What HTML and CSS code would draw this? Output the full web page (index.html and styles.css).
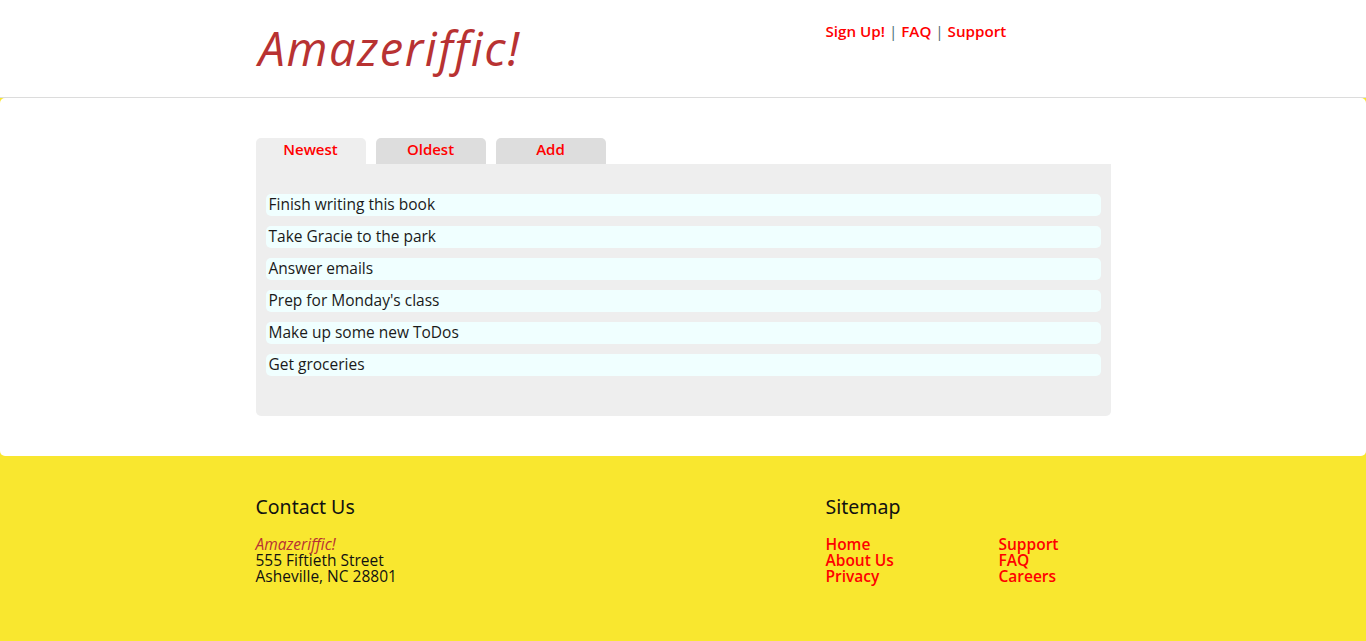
FILE: index.html
```html
<!DOCTYPE html>
<html lang="en">
<head>
<meta charset="utf-8">
<title>Amazeriffic</title>
<link rel="stylesheet" href="styles.css">
</head>
<body>
<header class="site-header">
  <div class="container header-row">
    <div class="brand-col">
      <h1 class="brand">Amazeriffic!</h1>
    </div>
    <nav class="top-nav">
      <a href="#">Sign Up!</a> <span class="sep">|</span>
      <a href="#">FAQ</a> <span class="sep">|</span>
      <a href="#">Support</a>
    </nav>
  </div>
</header>
<main class="site-main">
  <div class="container">
    <div class="tabs">
      <a class="tab active" href="#">Newest</a>
      <a class="tab" href="#">Oldest</a>
      <a class="tab" href="#">Add</a>
    </div>
    <div class="content">
      <ul class="todos">
        <li>Finish writing this book</li>
        <li>Take Gracie to the park</li>
        <li>Answer emails</li>
        <li>Prep for Monday's class</li>
        <li>Make up some new ToDos</li>
        <li>Get groceries</li>
      </ul>
    </div>
  </div>
</main>
<footer class="site-footer">
  <div class="container footer-row">
    <div class="contact">
      <h3 class="footer-title">Contact Us</h3>
      <p class="address"><span class="brand-small">Amazeriffic!</span><br>555 Fiftieth Street<br>Asheville, NC 28801</p>
    </div>
    <div class="sitemap">
      <h3 class="footer-title">Sitemap</h3>
      <div class="sitemap-cols">
        <ul class="links first">
          <li><a href="#">Home</a></li>
          <li><a href="#">About Us</a></li>
          <li><a href="#">Privacy</a></li>
        </ul>
        <ul class="links">
          <li><a href="#">Support</a></li>
          <li><a href="#">FAQ</a></li>
          <li><a href="#">Careers</a></li>
        </ul>
      </div>
    </div>
  </div>
</footer>
</body>
</html>
```
FILE: styles.css
```css
html, body {
  margin: 0;
  padding: 0;
}
body {
  background: #f9e72f;
  font-family: "Open Sans", "DejaVu Sans", sans-serif;
  font-size: 15.5px;
  color: #111;
  min-height: 641px;
}
a {
  color: #ff0000;
  text-decoration: none;
  font-weight: 600;
}
.container {
  width: 855px;
  margin: 0 auto;
}
.site-header {
  background: #fff;
  border-bottom: 1px solid #dcdcdc;
  height: 97px;
}
.header-row {
  display: flex;
}
.brand-col {
  width: 570px;
  flex-shrink: 0;
}
.brand {
  margin: 0;
  padding-top: 20px;
  padding-left: 3px;
  font-family: "Open Sans", sans-serif;
  font-style: italic;
  font-weight: 400;
  font-size: 47px;
  line-height: 56px;
  color: #b83232;
  letter-spacing: 1.6px;
}
.top-nav {
  padding-top: 20px;
  line-height: 22px;
  font-size: 15.2px;
}
.top-nav .sep {
  color: #4a6a70;
  font-weight: 400;
}
.site-main {
  background: #fff;
  border-radius: 5px;
  padding: 40px 0;
}
.tabs {
  display: flex;
  gap: 10px;
}
.tab {
  width: 110px;
  height: 26px;
  line-height: 23px;
  font-size: 15px;
  text-align: center;
  background: #dddddd;
  border-radius: 5px 5px 0 0;
}
.tab.active {
  background: #eeeeee;
}
.content {
  background: #eeeeee;
  border-radius: 0 0 5px 5px;
  padding: 30px 10px 30px;
}
.todos {
  list-style: none;
  margin: 0;
  padding: 0;
  display: flex;
  flex-direction: column;
  gap: 10px;
  padding-bottom: 10px;
}
.todos li {
  background: #f0ffff;
  border-radius: 5px;
  height: 22px;
  line-height: 20px;
  padding-left: 3px;
  color: #1a1a1a;
}
.site-footer {
  padding-top: 37px;
}
.footer-row {
  display: flex;
}
.contact {
  width: 570px;
  flex-shrink: 0;
}
.sitemap {
  flex: 1;
}
.footer-title {
  margin: 0;
  font-family: "Noto Sans", sans-serif;
  font-weight: 400;
  font-size: 19.5px;
  line-height: 28px;
  color: #111;
}
.address {
  margin: 15px 0 0;
  line-height: 16px;
}
.brand-small {
  font-style: italic;
  color: #b83232;
}
.sitemap-cols {
  display: flex;
  margin-top: 15px;
}
.links {
  list-style: none;
  margin: 0;
  padding: 0;
  line-height: 16px;
}
.links.first {
  width: 173px;
}
.links a {
  font-weight: 600;
}
```
